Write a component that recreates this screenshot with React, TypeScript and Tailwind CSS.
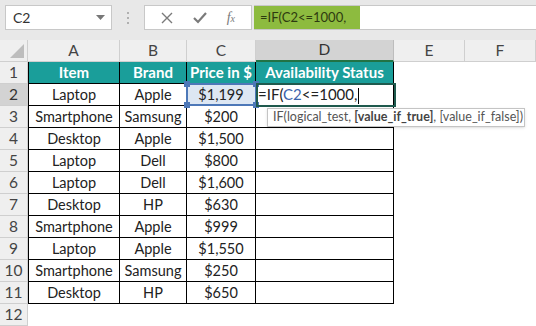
import { Fragment } from "react";

const font = { fontFamily: "Lato, 'Open Sans', sans-serif" };

const rows = [
  ["Laptop", "Apple", "$1,199"],
  ["Smartphone", "Samsung", "$200"],
  ["Desktop", "Apple", "$1,500"],
  ["Laptop", "Dell", "$800"],
  ["Laptop", "Dell", "$1,600"],
  ["Desktop", "HP", "$630"],
  ["Smartphone", "Apple", "$999"],
  ["Laptop", "Apple", "$1,550"],
  ["Smartphone", "Samsung", "$250"],
  ["Desktop", "HP", "$650"],
];

const colHeads = ["A", "B", "C", "D", "E", "F"];

const FormulaBar = () => (
  <div className="flex items-start h-[40px] bg-[#e8e8e8] pt-[5px] pl-[5px]">
    <div className="w-[107px] h-[25px] bg-white border border-[#c8c8c8] flex items-center justify-between pl-[7px] pr-[6px] text-[14px] text-[#333]">
      <span>C2</span>
      <svg width="9" height="6" viewBox="0 0 9 6">
        <path d="M0 0 L9 0 L4.5 5 Z" fill="#777" />
      </svg>
    </div>
    <div className="w-[32px] h-[25px] flex flex-col items-center justify-center gap-[3px]">
      <span className="w-[2px] h-[2px] bg-[#b0b0b0]" />
      <span className="w-[2px] h-[2px] bg-[#b0b0b0]" />
      <span className="w-[2px] h-[2px] bg-[#b0b0b0]" />
    </div>
    <div className="w-[108px] h-[25px] bg-white border border-[#c8c8c8] flex items-center justify-around px-[6px]">
      <svg width="12" height="12" viewBox="0 0 12 12">
        <path d="M1 1 L11 11 M11 1 L1 11" stroke="#7a7a7a" strokeWidth="1.4" />
      </svg>
      <svg width="14" height="12" viewBox="0 0 14 12">
        <path d="M1 6 L5 10 L13 1" stroke="#7a7a7a" strokeWidth="2.2" fill="none" />
      </svg>
      <span className="text-[14px] italic text-[#7a7a7a]" style={{ fontFamily: "'Liberation Serif', serif" }}>
        f<span className="text-[10px]">x</span>
      </span>
    </div>
    <div className="flex-1 h-[25px] ml-[2px] bg-white border-y border-[#c8c8c8] flex">
      <div className="w-[106px] h-full bg-[#8dbb3f] flex items-center pl-[6px] text-[13px] text-[#2d3a10]">
        =IF(C2&lt;=1000,
      </div>
    </div>
  </div>
);

const App = () => {
  return (
    <div className="w-[536px] h-[326px] overflow-hidden bg-white relative" style={font}>
      <FormulaBar />
      <div className="grid grid-cols-[28px_92px_67px_69px_138px_71px_71px] auto-rows-[22px] text-[14.5px] text-[#222]">
        {/* corner */}
        <div className="bg-[#efefef] border-r border-b border-[#cfcfcf] relative">
          <svg className="absolute right-[3px] bottom-[3px]" width="14" height="14" viewBox="0 0 14 14">
            <path d="M14 0 L14 14 L0 14 Z" fill="#bdbdbd" />
          </svg>
        </div>
        {colHeads.map((c) => (
          <div
            key={c}
            className={
              c === "D"
                ? "bg-[#d3d3d3] border-r border-b-2 border-b-[#217346] border-r-[#bdbdbd] flex items-center justify-center text-[15.5px] text-[#333]"
                : "bg-[#efefef] border-r border-b border-[#cfcfcf] flex items-center justify-center text-[15.5px] text-[#444]"
            }
          >
            {c}
          </div>
        ))}

        {/* row 1 */}
        <div className="bg-[#efefef] border-r border-b border-[#cfcfcf] flex items-center justify-center text-[15.5px] text-[#444]">1</div>
        {["Item", "Brand", "Price in $", "Availability Status"].map((h, i) => (
          <div
            key={h}
            className={
              "bg-[#1a9e9a] text-white text-[15px] font-bold border-r border-b border-black flex items-center justify-center whitespace-nowrap" +
              (i === 0 ? " border-l" : "")
            }
          >
            {h}
          </div>
        ))}
        <div />
        <div />

        {rows.map((r, idx) => {
          const n = idx + 2;
          return (
            <Fragment key={n}>
              <div
                className={
                  (n === 2 ? "bg-[#d3d3d3] text-[#333]" : "bg-[#efefef] text-[#444]") +
                  " border-r border-b border-[#cfcfcf] flex items-center justify-center text-[15.5px]"
                }
              >
                {n}
              </div>
              {r.map((v, i) => (
                <div
                  key={i}
                  className={
                    "border-r border-b border-black flex items-center justify-center whitespace-nowrap" +
                    (i === 0 ? " border-l" : "") +
                    (n === 2 && i === 2 ? " bg-[#dde7f3]" : "")
                  }
                >
                  {v}
                </div>
              ))}
              <div className="border-r border-b border-black flex items-center pl-[2px] whitespace-nowrap text-[15px]">
                {n === 2 && (
                  <span>
                    =IF(<span className="text-[#3b64ad]">C2</span>&lt;=1000,
                    <span className="inline-block w-[1px] h-[16px] bg-black align-middle ml-[1px]" />
                  </span>
                )}
              </div>
              <div />
              <div />
            </Fragment>
          );
        })}

        <div className="bg-[#efefef] border-r border-b border-[#cfcfcf] flex items-center justify-center text-[15.5px] text-[#444]">12</div>
      </div>

      {/* C2 selection */}
      <div className="absolute left-[186px] top-[83px] w-[71px] h-[23px] border-2 border-[#4d78b8] pointer-events-none">
        <span className="absolute -left-[4px] -top-[4px] w-[6px] h-[6px] bg-[#4d78b8]" />
        <span className="absolute -right-[4px] -top-[4px] w-[6px] h-[6px] bg-[#4d78b8]" />
        <span className="absolute -left-[4px] -bottom-[4px] w-[6px] h-[6px] bg-[#4d78b8]" />
        <span className="absolute -right-[4px] -bottom-[4px] w-[6px] h-[6px] bg-[#4d78b8]" />
      </div>
      {/* D2 active */}
      <div className="absolute left-[256px] top-[83px] w-[140px] h-[24px] border-2 border-[#1f5a4e] pointer-events-none" />

      {/* tooltip */}
      <div className="absolute left-[267px] top-[108px] w-[258px] h-[19px] bg-white border border-[#c4c4c4] shadow-sm flex items-center pl-[5px] text-[12.5px] text-[#555] whitespace-nowrap">
        IF(logical_test,&nbsp;<b className="text-[#444]">[value_if_true]</b>, [value_if_false])
      </div>
    </div>
  );
};

export default App;
